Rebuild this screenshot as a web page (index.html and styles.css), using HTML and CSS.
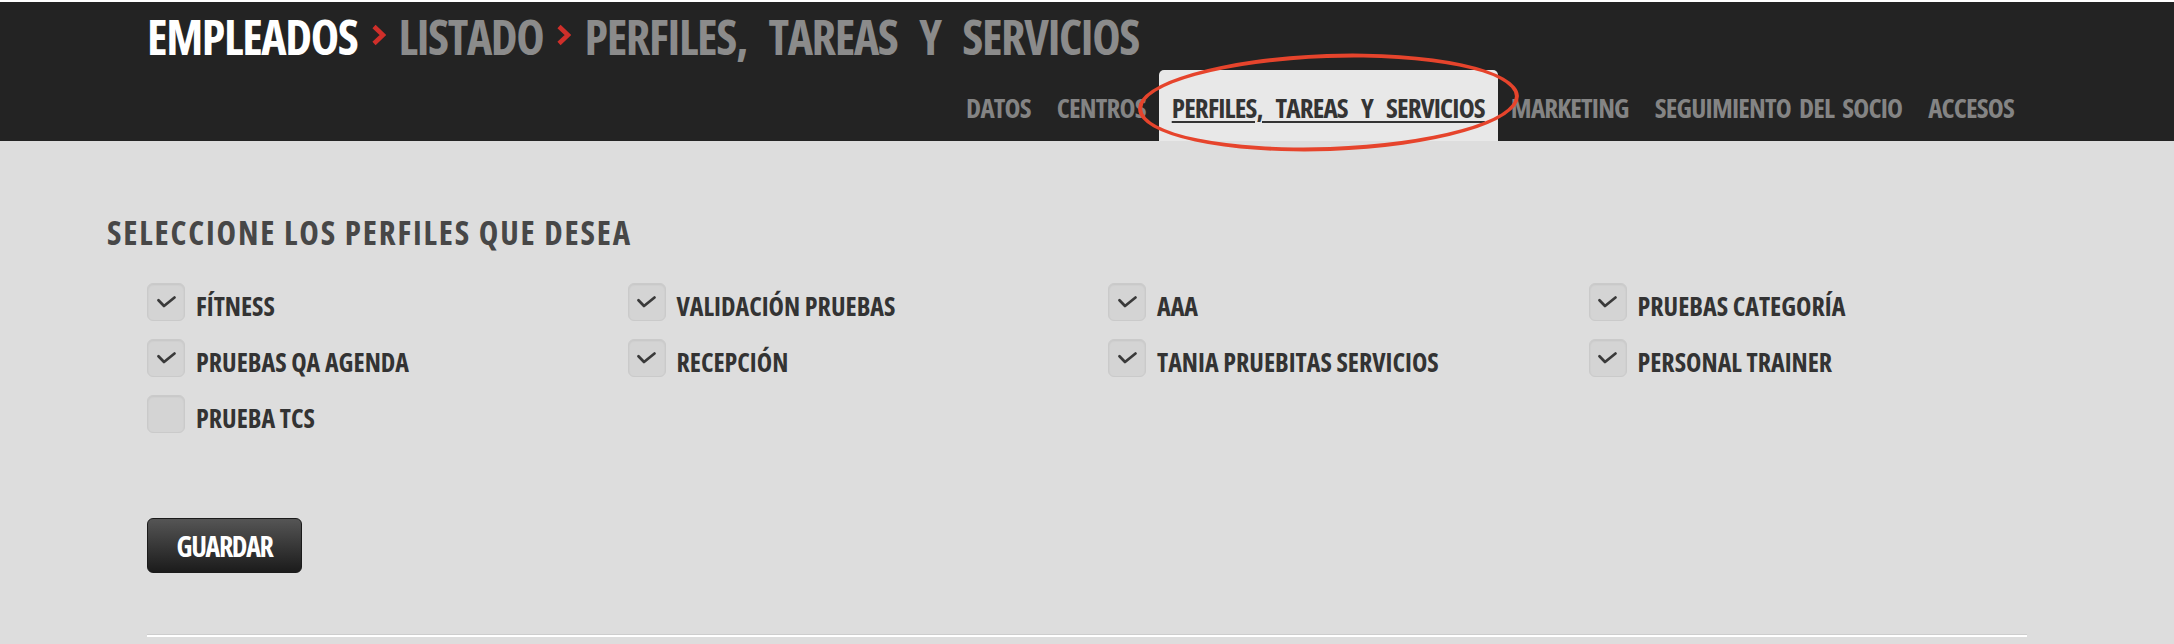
FILE: index.html
```html
<!DOCTYPE html>
<html lang="es">
<head>
<meta charset="utf-8">
<title>Empleados - Perfiles, tareas y servicios</title>
<link rel="stylesheet" href="styles.css">
</head>
<body>
<header class="topbar">
  <div class="container">
    <h1 class="crumbs">
      <span class="crumb-current">EMPLEADOS</span><svg class="chev" width="15" height="22" viewBox="0 0 15 22" aria-hidden="true"><path d="M3 2.5 L12 11 L3 19.5" fill="none" stroke="#cf2f2a" stroke-width="4.6"/></svg><span class="crumb">LISTADO</span><svg class="chev" width="15" height="22" viewBox="0 0 15 22" aria-hidden="true"><path d="M3 2.5 L12 11 L3 19.5" fill="none" stroke="#cf2f2a" stroke-width="4.6"/></svg><span class="crumb">PERFILES, TAREAS Y SERVICIOS</span>
    </h1>
    <nav class="tabs">
      <a class="tab" href="#">DATOS</a>
      <a class="tab" href="#">CENTROS</a>
      <a class="tab active" href="#"><span class="tab-text">PERFILES, TAREAS Y SERVICIOS</span><span class="mark" aria-hidden="true"></span></a>
      <a class="tab" href="#">MARKETING</a>
      <a class="tab" href="#">SEGUIMIENTO DEL SOCIO</a>
      <a class="tab" href="#">ACCESOS</a>
    </nav>
  </div>
</header>

<main class="content">
  <h2 class="title">SELECCIONE LOS PERFILES QUE DESEA</h2>
  <form class="form">
    <div class="grid">
      <label class="opt"><span class="box"><svg class="tick" width="19" height="12" viewBox="0 0 19 12"><path d="M1.5 4.3 L7 10 L17.5 1.5" fill="none" stroke="#3a3a3a" stroke-width="2.7" stroke-linecap="round" stroke-linejoin="round"/></svg></span><span class="lbl">FÍTNESS</span></label>
      <label class="opt"><span class="box"><svg class="tick" width="19" height="12" viewBox="0 0 19 12"><path d="M1.5 4.3 L7 10 L17.5 1.5" fill="none" stroke="#3a3a3a" stroke-width="2.7" stroke-linecap="round" stroke-linejoin="round"/></svg></span><span class="lbl">VALIDACIÓN PRUEBAS</span></label>
      <label class="opt"><span class="box"><svg class="tick" width="19" height="12" viewBox="0 0 19 12"><path d="M1.5 4.3 L7 10 L17.5 1.5" fill="none" stroke="#3a3a3a" stroke-width="2.7" stroke-linecap="round" stroke-linejoin="round"/></svg></span><span class="lbl">AAA</span></label>
      <label class="opt"><span class="box"><svg class="tick" width="19" height="12" viewBox="0 0 19 12"><path d="M1.5 4.3 L7 10 L17.5 1.5" fill="none" stroke="#3a3a3a" stroke-width="2.7" stroke-linecap="round" stroke-linejoin="round"/></svg></span><span class="lbl">PRUEBAS CATEGORÍA</span></label>
      <label class="opt"><span class="box"><svg class="tick" width="19" height="12" viewBox="0 0 19 12"><path d="M1.5 4.3 L7 10 L17.5 1.5" fill="none" stroke="#3a3a3a" stroke-width="2.7" stroke-linecap="round" stroke-linejoin="round"/></svg></span><span class="lbl">PRUEBAS QA AGENDA</span></label>
      <label class="opt"><span class="box"><svg class="tick" width="19" height="12" viewBox="0 0 19 12"><path d="M1.5 4.3 L7 10 L17.5 1.5" fill="none" stroke="#3a3a3a" stroke-width="2.7" stroke-linecap="round" stroke-linejoin="round"/></svg></span><span class="lbl">RECEPCIÓN</span></label>
      <label class="opt"><span class="box"><svg class="tick" width="19" height="12" viewBox="0 0 19 12"><path d="M1.5 4.3 L7 10 L17.5 1.5" fill="none" stroke="#3a3a3a" stroke-width="2.7" stroke-linecap="round" stroke-linejoin="round"/></svg></span><span class="lbl">TANIA PRUEBITAS SERVICIOS</span></label>
      <label class="opt"><span class="box"><svg class="tick" width="19" height="12" viewBox="0 0 19 12"><path d="M1.5 4.3 L7 10 L17.5 1.5" fill="none" stroke="#3a3a3a" stroke-width="2.7" stroke-linecap="round" stroke-linejoin="round"/></svg></span><span class="lbl">PERSONAL TRAINER</span></label>
      <label class="opt"><span class="box"></span><span class="lbl">PRUEBA TCS</span></label>
    </div>
    <button class="btn" type="button">GUARDAR</button>
    <div class="rule"></div>
  </form>
</main>
</body>
</html>
```
FILE: styles.css
```css
html, body {
  margin: 0;
  padding: 0;
}
body {
  background: #dddddd;
  font-family: "Open Sans", "Liberation Sans Narrow", sans-serif;
  font-stretch: 75%;
  font-weight: 700;
}
.topbar {
  border-top: 2px solid #ffffff;
  background: #232323;
  height: 139px;
}
.container {
  width: 1880px;
  margin: 0 auto;
}
.crumbs {
  margin: 0;
  padding-top: 11px;
  font-size: 48px;
  line-height: 48px;
  font-weight: 700;
  letter-spacing: -0.028em;
  word-spacing: 0.3em;
  white-space: nowrap;
}
.crumb-current { color: #ffffff; }
.crumb { color: #8b8b8b; }
.chev {
  vertical-align: 9px;
  margin: 0 13px 0 13px;
}
.tabs {
  display: flex;
  justify-content: flex-end;
  margin-top: 9px;
}
.tab {
  display: block;
  padding: 24px 13px 20px;
  font-size: 27px;
  line-height: 27px;
  letter-spacing: -0.03em;
  word-spacing: 4px;
  color: #848484;
  text-decoration: none;
  white-space: nowrap;
}
.tab.active {
  position: relative;
  background: #e8e8e8;
  border-radius: 5px 5px 0 0;
  color: #343434;
}
.tab-text {
  word-spacing: 9px;
  text-decoration: underline;
  text-decoration-thickness: 2px;
  text-underline-offset: 3px;
}
.mark {
  position: absolute;
  left: -21px;
  right: -21px;
  top: -16px;
  bottom: -10px;
  border: 4px solid #e6442c;
  border-radius: 50%;
  transform: rotate(-2deg);
  pointer-events: none;
  z-index: 2;
}
.content {
  width: 1960px;
  margin: 0 auto;
}
.title {
  margin: 75px 0 0;
  font-size: 33px;
  line-height: 33px;
  font-weight: 700;
  letter-spacing: 0.056em;
  color: #474747;
}
.form {
  padding-left: 40px;
}
.grid {
  display: grid;
  grid-template-columns: repeat(4, 480.5px);
  row-gap: 18px;
  margin-top: 34px;
}
.opt {
  display: flex;
  align-items: flex-start;
  gap: 11px;
  height: 38px;
}
.box {
  box-sizing: border-box;
  flex: none;
  width: 38px;
  height: 38px;
  border: 1px solid #cacaca;
  border-radius: 6px;
  background: #d4d4d4;
  box-shadow: inset 0 1px 2px rgba(0,0,0,0.07);
  display: flex;
  align-items: center;
  justify-content: center;
}
.tick {
  display: block;
}
.lbl {
  padding-top: 9.5px;
  font-size: 26px;
  line-height: 26px;
  color: #333333;
  white-space: nowrap;
}
.btn {
  display: block;
  margin-top: 85px;
  width: 155px;
  height: 55px;
  padding: 0;
  border: 1px solid #1a1a1a;
  border-radius: 6px;
  background: linear-gradient(#555555, #1b1b1b);
  color: #ffffff;
  font-family: inherit;
  font-stretch: 75%;
  font-weight: 700;
  font-size: 28px;
  letter-spacing: -0.05em;
  line-height: 28px;
}
.rule {
  width: 1880px;
  margin-top: 61px;
  border-top: 1px solid #cdcdcd;
  border-bottom: 2px solid #ffffff;
}
```
